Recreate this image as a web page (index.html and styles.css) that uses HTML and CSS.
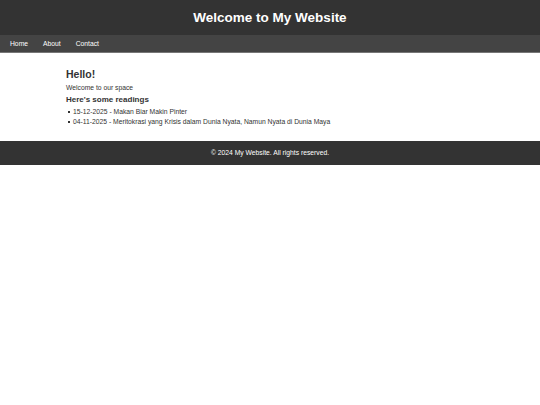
FILE: index.html
```html
<!DOCTYPE html>
<html>
<head>
<meta charset="utf-8">
<link rel="stylesheet" href="styles.css">
</head>
<body>
<header class="site-header">
  <h1 class="title">Welcome to My Website</h1>
</header>
<nav class="nav">
  <a href="#">Home</a>
  <a href="#">About</a>
  <a href="#">Contact</a>
</nav>
<main class="content">
  <h2 class="hello">Hello!</h2>
  <p class="intro">Welcome to our space</p>
  <h3 class="readings">Here's some readings</h3>
  <ul class="list">
    <li>15-12-2025 - Makan Biar Makin Pinter</li>
    <li>04-11-2025 - Meritokrasi yang Krisis dalam Dunia Nyata, Namun Nyata di Dunia Maya</li>
  </ul>
</main>
<footer class="footer">© 2024 My Website. All rights reserved.</footer>
</body>
</html>
```
FILE: styles.css
```css
* { box-sizing: border-box; }
body {
  margin: 0;
  font-family: "Liberation Sans", Arial, sans-serif;
  background: #fff;
  color: #333;
}
.site-header {
  background: #333;
  height: 35px;
  display: flex;
  align-items: center;
  justify-content: center;
}
.title {
  margin: 0;
  color: #fff;
  font-size: 13.5px;
  font-weight: bold;
}
.nav {
  background: #444;
  height: 18px;
  border-bottom: 1px solid #777;
  display: flex;
  align-items: center;
  padding-left: 10px;
  gap: 15px;
}
.nav a {
  color: #fff;
  text-decoration: none;
  font-size: 6.75px;
}
.content {
  width: 408px;
  margin: 0 auto;
  padding: 14px 0 14px;
}
.hello {
  margin: 0;
  font-size: 10.5px;
  font-weight: bold;
  line-height: 14px;
}
.intro {
  margin: 2px 0 0;
  font-size: 6.75px;
  line-height: 10px;
}
.readings {
  margin: 1px 0 0;
  font-size: 8px;
  font-weight: bold;
  line-height: 12px;
}
.list {
  margin: 1px 0 0;
  padding: 0;
  list-style: none;
  font-size: 6.75px;
  line-height: 10px;
}
.list li {
  display: flex;
  align-items: center;
  gap: 3px;
  padding-left: 2px;
}
.list li::before {
  content: "";
  width: 2px;
  height: 2px;
  background: #333;
}
.footer {
  background: #333;
  color: #fff;
  text-align: center;
  font-size: 6.75px;
  height: 24px;
  line-height: 24px;
}
```
